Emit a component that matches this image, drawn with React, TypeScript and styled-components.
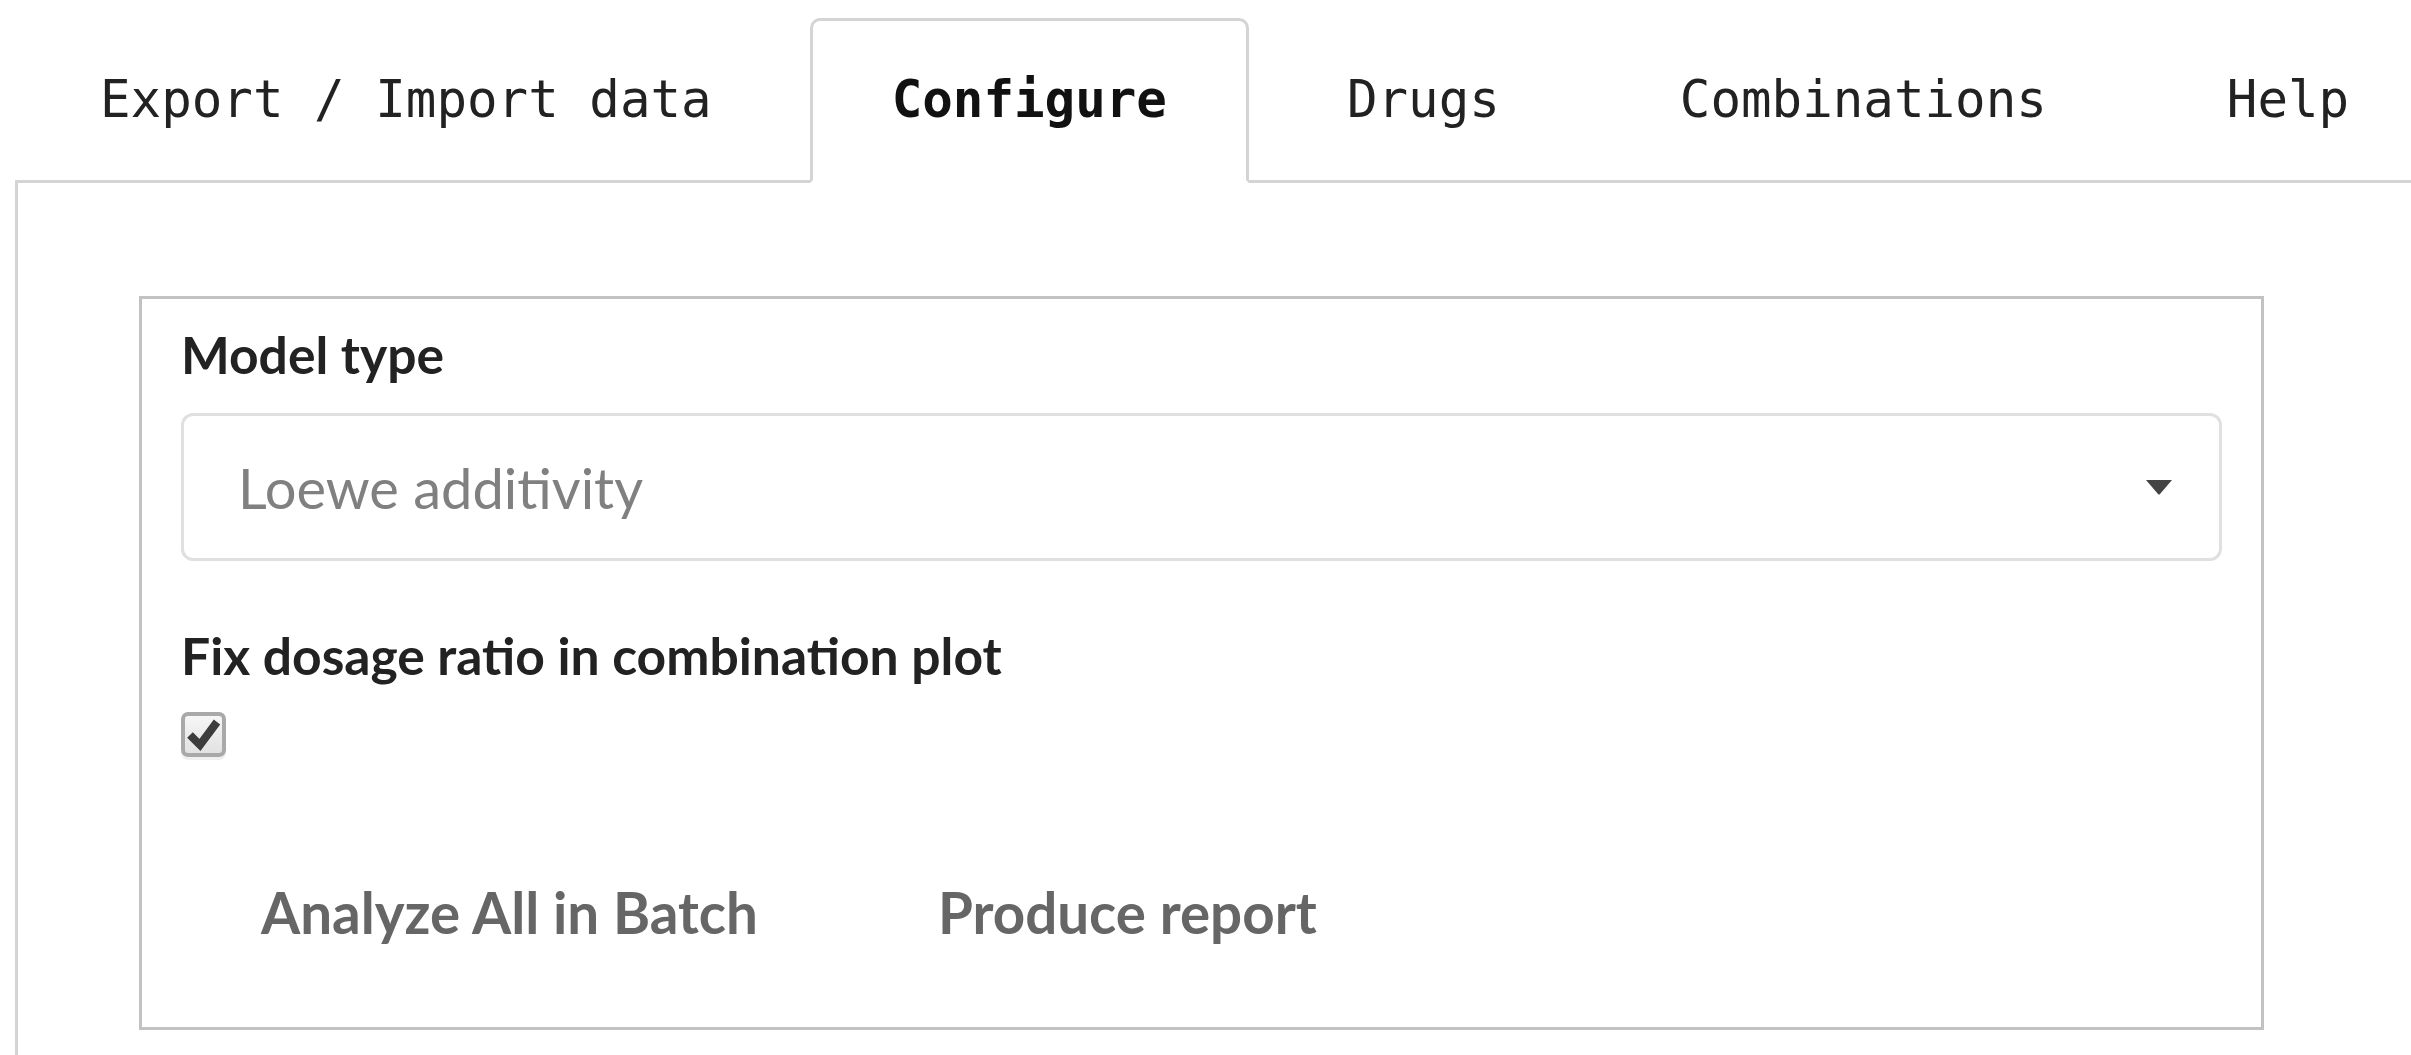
import React from "react";
import styled, { createGlobalStyle } from "styled-components";

const GlobalStyle = createGlobalStyle`
  html, body {
    margin: 0;
    padding: 0;
    background: #ffffff;
    overflow: hidden;
  }
  body {
    font-family: Lato, "Open Sans", sans-serif;
    color: #222222;
  }
`;

const Page = styled.div`
  padding: 18px 0 0 15px;
  width: 2411px;
  height: 1055px;
  box-sizing: border-box;
  overflow: hidden;
`;

const TabList = styled.ul`
  display: flex;
  align-items: flex-end;
  list-style: none;
  margin: 0;
  padding: 0 0 0 3px;
  border-bottom: 3px solid #d4d4d4;
  gap: 16px;
`;

const Tab = styled.li<{ $active?: boolean }>`
  font-family: "DejaVu Sans Mono", "Liberation Mono", monospace;
  font-size: 50.8px;
  line-height: 72px;
  font-weight: ${(p) => (p.$active ? 700 : 400)};
  color: ${(p) => (p.$active ? "#111111" : "#222222")};
  padding: 43px 79px 44px;
  margin-bottom: -3px;
  border: 3px solid ${(p) => (p.$active ? "#d4d4d4" : "transparent")};
  border-bottom-color: transparent;
  border-radius: 10px 10px 0 0;
  background: ${(p) => (p.$active ? "#ffffff" : "transparent")};
  white-space: pre;
`;

const Panel = styled.div`
  border-left: 3px solid #d4d4d4;
  padding: 113px 0 0 121px;
  height: 1000px;
`;

const Well = styled.div`
  width: 2125px;
  box-sizing: border-box;
  border: 3px solid #c2c2c2;
  padding: 26px 39px 60px;
  display: flex;
  flex-direction: column;
`;

const Label = styled.div<{ $gap?: number }>`
  font-family: Lato, sans-serif;
  font-weight: 700;
  font-size: 51.6px;
  line-height: 58px;
  color: #222222;
  margin-top: ${(p) => p.$gap ?? 0}px;
`;

const Select = styled.div`
  margin-top: 30px;
  height: 148px;
  box-sizing: border-box;
  border: 3px solid #e0e0e0;
  border-radius: 12px;
  display: flex;
  align-items: center;
  justify-content: space-between;
  padding: 0 46px 0 54px;
`;

const SelectValue = styled.span`
  font-family: Lato, sans-serif;
  font-size: 56px;
  color: #808080;
`;

const CheckBox = styled.span`
  margin-top: 28px;
  width: 45px;
  height: 45px;
  box-sizing: border-box;
  border: 4px solid #a9a9a9;
  border-radius: 7px;
  background: linear-gradient(#f6f6f6, #e2e2e2);
  box-shadow: 0 3px 0 #f0f0f0;
  display: flex;
  align-items: center;
  justify-content: center;
`;

const ButtonRow = styled.div`
  margin-top: 100px;
  display: flex;
  gap: 20px;
`;

const Button = styled.button`
  font-family: Lato, sans-serif;
  font-weight: 700;
  font-size: 56.5px;
  line-height: 58px;
  color: #666666;
  background: transparent;
  border: none;
  padding: 26px 80px;
  cursor: pointer;
`;

const tabs = ["Export / Import data", "Configure", "Drugs", "Combinations", "Help"];

export default function App() {
  return (
    <>
      <GlobalStyle />
      <Page>
        <TabList>
          {tabs.map((t) => (
            <Tab key={t} $active={t === "Configure"}>
              {t}
            </Tab>
          ))}
        </TabList>
        <Panel>
          <Well>
            <Label>Model type</Label>
            <Select>
              <SelectValue>Loewe additivity</SelectValue>
              <svg width="28" height="16" viewBox="0 0 28 16">
                <path d="M1 1 H27 L15 15 Q14 16 13 15 Z" fill="#444444" />
              </svg>
            </Select>
            <Label $gap={65}>Fix dosage ratio in combination plot</Label>
            <CheckBox>
              <svg width="37" height="37" viewBox="0 0 37 37">
                <polyline
                  points="5,19 15,29 32,6"
                  fill="none"
                  stroke="#3d3d3d"
                  strokeWidth="8"
                />
              </svg>
            </CheckBox>
            <ButtonRow>
              <Button>Analyze All in Batch</Button>
              <Button>Produce report</Button>
            </ButtonRow>
          </Well>
        </Panel>
      </Page>
    </>
  );
}
